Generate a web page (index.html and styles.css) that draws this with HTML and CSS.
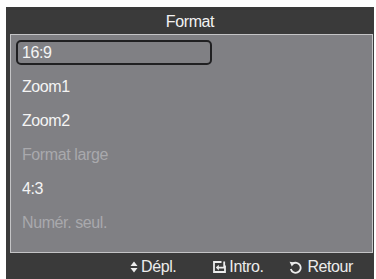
FILE: index.html
```html
<!DOCTYPE html>
<html>
<head>
<meta charset="utf-8">
<link rel="stylesheet" href="styles.css">
</head>
<body>
<div class="frame">
  <div class="title">Format</div>
  <div class="panel">
    <ul class="list">
      <li class="row"><span class="item selected">16:9</span></li>
      <li class="row"><span class="item">Zoom1</span></li>
      <li class="row"><span class="item">Zoom2</span></li>
      <li class="row"><span class="item disabled">Format large</span></li>
      <li class="row"><span class="item">4:3</span></li>
      <li class="row"><span class="item disabled">Numér. seul.</span></li>
    </ul>
  </div>
  <div class="footer">
    <span class="hint hint-move">
      <svg class="ico" width="8" height="12" viewBox="0 0 8 12"><path d="M4 0.5 L7.5 5 H0.5 Z M4 11.5 L7.5 7 H0.5 Z" fill="#ececec"/></svg>
      <span>Dépl.</span>
    </span>
    <span class="hint hint-enter">
      <svg class="ico" width="13" height="12" viewBox="0 0 13 12"><path d="M8.5 1 H1 V11 H12 V4.5" fill="none" stroke="#ececec" stroke-width="1.8"/><path d="M11.2 0.5 V6.6 H5" fill="none" stroke="#ececec" stroke-width="1.8"/><path d="M2.8 6.6 L5.8 3.8 V9.4 Z" fill="#ececec"/></svg>
      <span>Intro.</span>
    </span>
    <span class="hint hint-back">
      <svg class="ico" width="13" height="13" viewBox="0 0 13 13"><path d="M3.6 2.8 A5 5 0 1 1 1.8 8" fill="none" stroke="#ececec" stroke-width="1.8"/><path d="M0.6 0.8 L5.8 1.6 L2.8 5.6 Z" fill="#ececec"/></svg>
      <span>Retour</span>
    </span>
  </div>
</div>
</body>
</html>
```
FILE: styles.css
```css
html, body {
  margin: 0;
  padding: 0;
  background: #ffffff;
}
body {
  font-family: "Liberation Sans", Arial, sans-serif;
  letter-spacing: -0.4px;
}
.frame {
  margin: 7px 0 0 6px;
  width: 368px;
  height: 272px;
  background: #3a3a3a;
  display: flex;
  flex-direction: column;
}
.title {
  height: 27px;
  line-height: 29px;
  text-align: center;
  color: #f2f2f2;
  font-size: 16px;
}
.panel {
  margin: 0 1px 0 4px;
  height: 217px;
  background: #808084;
  border: 1px solid #c4c4c6;
}
.list {
  list-style: none;
  margin: 0;
  padding: 0;
}
.row {
  height: 34px;
  padding: 5px 0 0 5px;
  box-sizing: border-box;
}
.item {
  display: block;
  width: 196px;
  height: 25px;
  box-sizing: border-box;
  border: 2px solid transparent;
  border-radius: 5px;
  padding-left: 4px;
  line-height: 22px;
  font-size: 16px;
  color: #f4f4f4;
}
.item.selected {
  border-color: #202022;
}
.item.disabled {
  color: #a9a9ad;
}
.footer {
  flex: 1;
  display: flex;
  align-items: center;
  padding-left: 124px;
  color: #ececec;
  font-size: 16px;
  padding-top: 2px;
}
.hint {
  display: flex;
  align-items: center;
  flex: none;
}
.ico {
  display: block;
  flex: none;
  margin-right: 3px;
}
.hint-enter {
  margin-left: 37px;
}
.hint-enter .ico {
  margin-right: 3px;
}
.hint-back {
  margin-left: 26px;
}
.hint-back .ico {
  margin-right: 5px;
}
```
